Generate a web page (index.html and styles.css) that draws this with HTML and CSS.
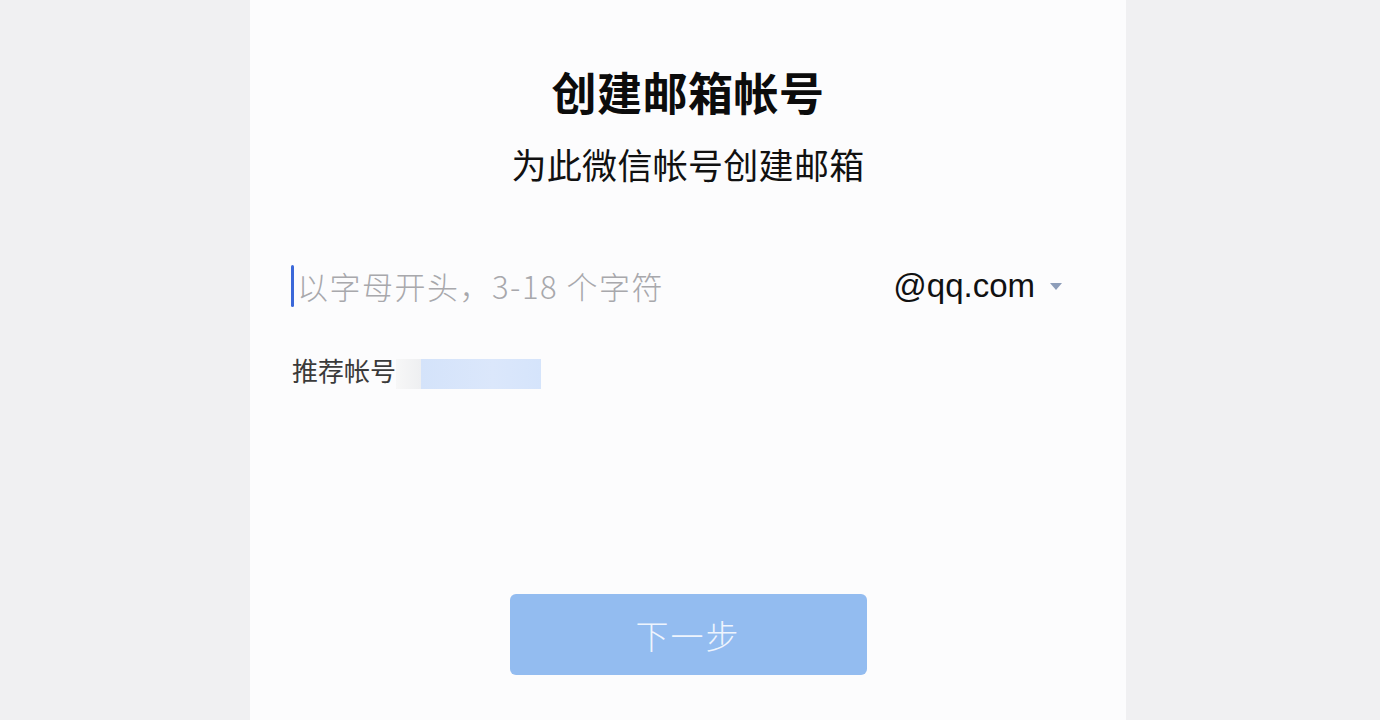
FILE: index.html
```html
<!DOCTYPE html>
<html lang="zh-CN">
<head>
<meta charset="utf-8">
<title>创建邮箱帐号</title>
<link rel="stylesheet" href="styles.css">
</head>
<body>
<div class="page">
  <main class="panel">
    <h1 class="title">创建邮箱帐号</h1>
    <p class="subtitle">为此微信帐号创建邮箱</p>
    <div class="input-row">
      <div class="field">
        <span class="cursor"></span>
        <span class="placeholder">以字母开头，3-18 个字符</span>
      </div>
      <div class="domain">
        <span class="domain-text">@qq.com</span>
        <span class="caret"></span>
      </div>
    </div>
    <div class="recommend">
      <span class="rec-label">推荐帐号</span>
      <span class="rec-blur"><span class="rec-gray"></span><span class="rec-blue"></span></span>
    </div>
    <div class="spacer"></div>
    <button class="next" type="button">下一步</button>
  </main>
</div>
</body>
</html>
```
FILE: styles.css
```css
html, body {
  margin: 0;
  padding: 0;
  height: 100%;
}
body {
  background: #f0f0f2;
  font-family: "Noto Sans CJK SC", "Noto Sans", sans-serif;
  overflow: hidden;
}
.page {
  display: flex;
  justify-content: center;
  height: 720px;
  padding-right: 4px;
}
.panel {
  width: 876px;
  height: 720px;
  background: #fcfcfd;
  display: flex;
  flex-direction: column;
  align-items: stretch;
  box-sizing: border-box;
  padding-top: 69px;
}
.title {
  margin: 0;
  font-size: 45px;
  line-height: 46px;
  font-weight: 700;
  color: #0c0c0c;
  text-align: center;
  letter-spacing: 0.5px;
}
.subtitle {
  margin: 31px 0 0;
  font-size: 35px;
  line-height: 36px;
  font-weight: 400;
  color: #111;
  text-align: center;
  letter-spacing: 0.3px;
}
.input-row {
  margin-top: 83px;
  height: 42px;
  display: flex;
  align-items: center;
  justify-content: space-between;
  padding: 0 64px 0 41px;
}
.field {
  display: flex;
  align-items: center;
  height: 42px;
}
.cursor {
  width: 3px;
  height: 42px;
  background: #3b68d9;
  border-radius: 2px;
  margin-right: 3px;
}
.placeholder {
  font-size: 31px;
  line-height: 42px;
  font-weight: 300;
  color: #a8a8ac;
  letter-spacing: 1.5px;
}
.domain {
  display: flex;
  align-items: center;
}
.domain-text {
  font-family: "Liberation Sans", Arial, sans-serif;
  font-size: 33px;
  line-height: 42px;
  color: #111;
}
.caret {
  width: 0;
  height: 0;
  margin-left: 15px;
  border-left: 6px solid transparent;
  border-right: 6px solid transparent;
  border-top: 7px solid #8d9db9;
}
.recommend {
  margin-top: 50px;
  display: flex;
  align-items: flex-start;
  padding-left: 42px;
  height: 32px;
}
.rec-label {
  font-size: 26px;
  line-height: 26px;
  color: #3a3a3a;
}
.rec-blur {
  display: flex;
  height: 30px;
  margin-top: 2px;
}
.rec-gray {
  width: 25px;
  background: linear-gradient(90deg, #f7f7f7, #eeeff1);
}
.rec-blue {
  width: 120px;
  background: linear-gradient(90deg, #d4e3fa, #dbe7fb 60%, #d5e4fb);
}
.spacer {
  flex: 1;
}
.next {
  align-self: center;
  width: 357px;
  height: 81px;
  margin: 0 0 45px 0;
  border: none;
  border-radius: 6px;
  background: #93bcf0;
  color: #eef4fd;
  font-family: "Noto Sans CJK SC", "Noto Sans", sans-serif;
  font-size: 33px;
  font-weight: 300;
  letter-spacing: 2px;
  padding: 0;
}
```
